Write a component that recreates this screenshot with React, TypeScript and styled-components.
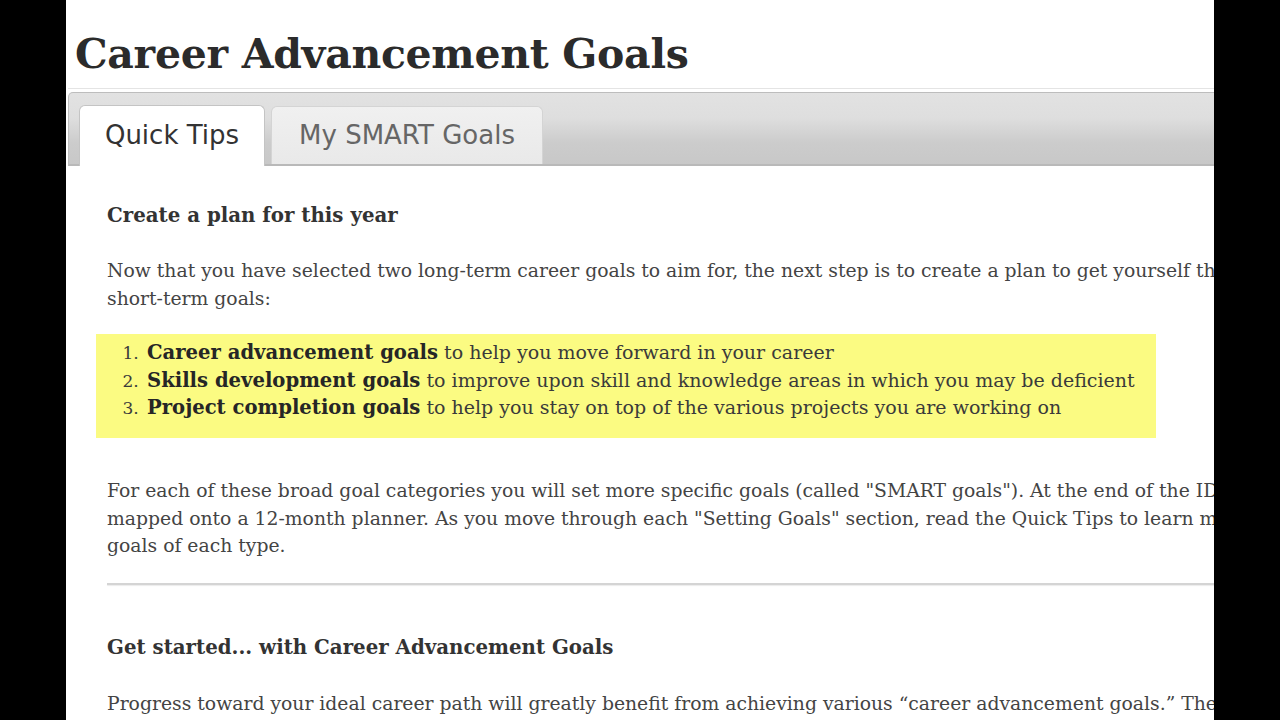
import React from 'react';
import styled, { createGlobalStyle } from 'styled-components';

const GlobalStyle = createGlobalStyle`
  html, body {
    margin: 0;
    padding: 0;
    background: #000;
  }
`;

const Screen = styled.div`
  width: 1280px;
  height: 720px;
  display: flex;
  justify-content: center;
  background: #000;
  overflow: hidden;
`;

const Page = styled.div`
  width: 1148px;
  height: 720px;
  background: #fff;
  overflow: hidden;
  color: #3a3a3a;
  font-family: 'DejaVu Serif', Georgia, serif;
`;

const Title = styled.h1`
  margin: 0;
  padding: 30px 0 0 9px;
  height: 58px;
  font-size: 41px;
  line-height: 48px;
  font-weight: 700;
  color: #2b2b2b;
  letter-spacing: -0.3px;
  white-space: nowrap;
`;

const TabFrame = styled.div`
  width: 1200px;
  margin-left: 2px;
  border-top: 1px solid #e4e4e4;
  padding-top: 3px;
`;

const TabBar = styled.div`
  display: flex;
  align-items: flex-end;
  gap: 6px;
  height: 71px;
  padding-left: 10px;
  border: 1px solid #bdbdbd;
  border-bottom: 2px solid #b9b9b9;
  border-radius: 5px 0 0 0;
  background: linear-gradient(#e2e2e2 0%, #dedede 35%, #cccccc 70%, #c8c8c8 100%);
`;

const Tab = styled.div<{ $active?: boolean }>`
  display: flex;
  align-items: center;
  justify-content: center;
  box-sizing: border-box;
  width: ${p => (p.$active ? '186px' : '272px')};
  height: ${p => (p.$active ? '61px' : '58px')};
  margin-bottom: ${p => (p.$active ? '-2px' : '0')};
  border: 1px solid ${p => (p.$active ? '#c4c4c4' : '#d4d4d4')};
  border-bottom: none;
  border-radius: 6px 6px 0 0;
  background: ${p => (p.$active ? '#fff' : 'linear-gradient(#f0f0f0, #e9e9e9)')};
  color: ${p => (p.$active ? '#333' : '#666')};
  font-family: 'DejaVu Sans', Verdana, sans-serif;
  font-size: 26px;
  padding-bottom: 2px;
`;

const Content = styled.div`
  padding: 36px 0 0 41px;
  width: 1400px;
`;

const Heading = styled.h2<{ $top?: number }>`
  margin: ${p => p.$top ?? 0}px 0 0;
  font-size: 19.8px;
  line-height: 27px;
  font-weight: 700;
  color: #333;
  white-space: nowrap;
`;

const Para = styled.p<{ $top?: number }>`
  margin: ${p => p.$top ?? 0}px 0 0;
  font-size: 18.8px;
  line-height: 27.5px;
  color: #444;
  white-space: nowrap;
`;

const Highlight = styled.div`
  margin: 22px 0 0 -11px;
  width: 1060px;
  height: 104px;
  box-sizing: border-box;
  padding-top: 5px;
  background: #fbfb82;
`;

const GoalList = styled.ol`
  margin: 0;
  padding: 0 0 0 48px;
  font-size: 19px;
  line-height: 27.5px;
  color: #3a3a3a;

  li {
    padding-left: 3px;
    white-space: nowrap;
  }

  li::marker {
    font-size: 17px;
  }

  b {
    font-size: 19.6px;
    color: #262626;
  }
`;

const Rule = styled.div`
  margin-top: 23px;
  height: 2px;
  background: #d4d4d4;
  box-shadow: 0 1px 1px #ececec;
`;

export default function App() {
  return (
    <>
      <GlobalStyle />
      <Screen>
        <Page>
          <Title>Career Advancement Goals</Title>
          <TabFrame>
            <TabBar>
              <Tab $active>Quick Tips</Tab>
              <Tab>My SMART Goals</Tab>
            </TabBar>
          </TabFrame>
          <Content>
            <Heading>Create a plan for this year</Heading>
            <Para $top={28}>
              Now that you have selected two long-term career goals to aim for, the next step is to create a plan to get yourself there by setting three types of
              <br />
              short-term goals:
            </Para>
            <Highlight>
              <GoalList>
                <li><b>Career advancement goals</b> to help you move forward in your career</li>
                <li><b>Skills development goals</b> to improve upon skill and knowledge areas in which you may be deficient</li>
                <li><b>Project completion goals</b> to help you stay on top of the various projects you are working on</li>
              </GoalList>
            </Highlight>
            <Para $top={39}>
              For each of these broad goal categories you will set more specific goals (called "SMART goals"). At the end of the IDP, these goals will be
              <br />
              mapped onto a 12-month planner. As you move through each "Setting Goals" section, read the Quick Tips to learn more about setting
              <br />
              goals of each type.
            </Para>
            <Rule />
            <Heading $top={49}>Get started... with Career Advancement Goals</Heading>
            <Para $top={29}>
              Progress toward your ideal career path will greatly benefit from achieving various “career advancement goals.” These goals might include
            </Para>
          </Content>
        </Page>
      </Screen>
    </>
  );
}
